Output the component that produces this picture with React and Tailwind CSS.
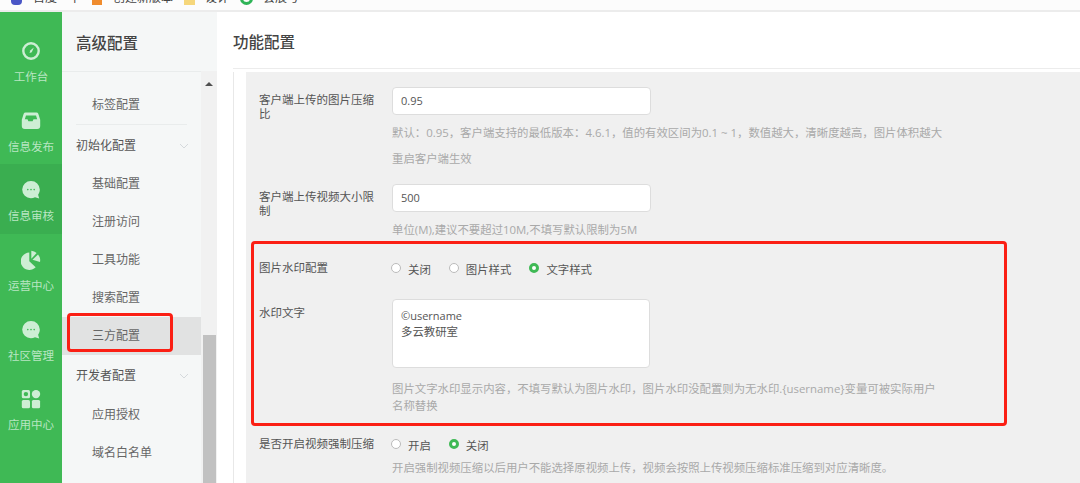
const cjk = "font-['Open_Sans','Noto_Sans_CJK_SC',sans-serif]";

function WorkIcon() {
  return (
    <svg width="20" height="20" viewBox="0 0 20 20" fill="none">
      <circle cx="10" cy="10" r="7.7" stroke="#cdeed4" strokeWidth="2.4" />
      <path d="M12.8 6.6 L10.8 11.2 L8.6 11.9 L9.2 9.6 Z" fill="#cdeed4" />
    </svg>
  );
}

function InboxIcon() {
  return (
    <svg width="20" height="20" viewBox="0 0 20 20">
      <path d="M4.5 1.5h11a2 2 0 0 1 1.8 1.2l1.9 6v6.3a3 3 0 0 1-3 3H3.8a3 3 0 0 1-3-3V8.7l1.9-6a2 2 0 0 1 1.8-1.2z" fill="#cdeed4" />
      <path d="M5 4.5h10l1.2 3.8h-3.7l-.9 2H7.4l-.9-2H3.8z" fill="#3fb955" />
    </svg>
  );
}

function ChatIcon() {
  return (
    <svg width="20" height="20" viewBox="0 0 20 20">
      <path d="M10 1a8.7 8.7 0 0 1 8.8 8.6c0 2.100-.6 3.800-1.700 5.100l1.100 3.800-4.200-1.300A9.300 9.300 0 0 1 10 18.200 8.600 8.600 0 0 1 1.200 9.600 8.700 8.700 0 0 1 10 1z" fill="#cdeed4" />
      <circle cx="6.800" cy="9.600" r=".8" fill="#3fb955" />
      <circle cx="10" cy="9.600" r=".8" fill="#3fb955" />
      <circle cx="13.200" cy="9.600" r=".8" fill="#3fb955" />
    </svg>
  );
}

function PieIcon() {
  return (
    <svg width="20" height="20" viewBox="0 0 20 20">
      <path d="M8.300 2.600v8.700l6.400 6A8.700 8.700 0 1 1 8.300 2.600z" fill="#cdeed4" />
      <path d="M10.300 .8a8 8 0 0 1 5.300 2.300l-5.300 5.700z" fill="#cdeed4" />
      <path d="M17 4.500a8.700 8.700 0 0 1 2 7.500l-7.500-2.200z" fill="#cdeed4" />
    </svg>
  );
}

function AppsIcon() {
  return (
    <svg width="20" height="20" viewBox="0 0 20 20">
      <rect x=".8" y="1" width="8.200" height="8.200" rx="1.500" fill="#cdeed4" />
      <circle cx="4.900" cy="5.100" r="2.200" fill="#3fb955" />
      <circle cx="15" cy="5.100" r="4.200" fill="#cdeed4" />
      <rect x=".8" y="11" width="8.200" height="8.200" rx="1.500" fill="#cdeed4" />
      <rect x="10.900" y="11" width="8.200" height="8.200" rx="1.500" fill="#cdeed4" />
    </svg>
  );
}

function Chevron() {
  return (
    <svg width="10" height="6" viewBox="0 0 10 6" fill="none">
      <path d="M1 1l4 4 4-4" stroke="#d5d9dc" strokeWidth="1" />
    </svg>
  );
}

function Rail({ icon, label, active }) {
  return (
    <div className={`flex h-[69.700px] flex-col items-center pt-[16px] ${active ? "bg-[#3aae50]" : ""}`}>
      {icon}
      <span className="mt-[9px] text-[11.500px] leading-[14px] whitespace-nowrap text-[#b9e6c3]">{label}</span>
    </div>
  );
}

function SubItem({ children, active }) {
  return (
    <div className={`flex h-[38px] items-center pl-[30px] text-[12px] text-[#666] ${active ? "bg-[#e1e2e2]" : ""}`}>
      {children}
    </div>
  );
}

function Group({ children }) {
  return (
    <div className="mt-[1.500px] flex h-[39px] items-center justify-between pr-[12px] pl-[14px] text-[12px] text-[#555]">
      {children}
      <Chevron />
    </div>
  );
}

function Radio({ on, label }) {
  return (
    <span className="flex items-center">
      {on ? (
        <span className="h-[10px] w-[10px] rounded-full border-[3px] border-[#3fb955] bg-white" />
      ) : (
        <span className="h-[10px] w-[10px] rounded-full border border-[#bbb] bg-white" />
      )}
      <span className="ml-[7px] pt-[3px] text-[11.400px] text-[#555]">{label}</span>
    </span>
  );
}

function Label({ children, className = "" }) {
  return <div className={`w-[133px] shrink-0 pr-[14px] text-[11.500px] leading-[14px] text-[#555] ${className}`}>{children}</div>;
}

function Hint({ children, className = "" }) {
  return <div className={`text-[11.400px] text-[#a9a9a9] ${className}`}>{children}</div>;
}

export default function App() {
  return (
    <div className={`relative flex h-[483px] w-[1080px] flex-col overflow-hidden bg-white ${cjk}`}>
      <div className="h-[12px] shrink-0 overflow-hidden border-b-2 border-[#ececec] bg-[#fcfcfc]">
        <div className="-mt-[10px] flex items-center pl-[11px] text-[12px] leading-[16px] text-[#444]">
          <span className="h-[14px] w-[11px] rounded-sm bg-[#4a56c6]" />
          <span className="ml-[11px] w-[48px]">百度一下</span>
          <span className="ml-[11px] h-[14px] w-[10px] bg-[#f08c2e]" />
          <span className="ml-[11px] w-[60px]">创建新版本</span>
          <span className="ml-[11px] h-[14px] w-[11px] bg-[#f6d77c]" />
          <span className="ml-[10px] w-[24px]">设计</span>
          <span className="ml-[11px] h-[14px] w-[13px] rounded-full border-[3px] border-[#2fb457]" />
          <span className="ml-[10px]">会展号</span>
        </div>
      </div>
      <div className="flex min-h-0 flex-1">
        <aside className="w-[62px] shrink-0 bg-[#3fb955] pt-[13px]">
          <Rail icon={<WorkIcon />} label="工作台" />
          <Rail icon={<InboxIcon />} label="信息发布" />
          <Rail icon={<ChatIcon />} label="信息审核" active />
          <Rail icon={<PieIcon />} label="运营中心" />
          <Rail icon={<ChatIcon />} label="社区管理" />
          <Rail icon={<AppsIcon />} label="应用中心" />
        </aside>
        <aside className="flex w-[155px] shrink-0 flex-col bg-[#f5f7f7]">
          <div className="flex h-[59px] shrink-0 items-center pt-[5px] pl-[14px] text-[15.500px] font-medium text-[#444]">高级配置</div>
          <div className="flex min-h-0 flex-1">
            <div className="w-[139px] shrink-0">
              <div className="mb-[14px] mr-[-1px] border-t border-[#e9ecec]" />
              <SubItem>标签配置</SubItem>
              <div className="mr-[14px] ml-[14px] -mt-[0.500px] border-t border-[#e9ecec]" />
              <Group>初始化配置</Group>
              <SubItem>基础配置</SubItem>
              <SubItem>注册访问</SubItem>
              <SubItem>工具功能</SubItem>
              <SubItem>搜索配置</SubItem>
              <SubItem active>三方配置</SubItem>
              <Group>开发者配置</Group>
              <SubItem>应用授权</SubItem>
              <SubItem>域名白名单</SubItem>
            </div>
            <div className="flex w-[16px] flex-col items-center bg-[#f1f1f1] pt-[11px]">
              <div className="h-0 w-0 border-x-[4px] border-b-[4px] border-x-transparent border-b-[#505050]" />
              <div className="mt-auto h-[148px] w-[13px] bg-[#c1c1c1]" />
            </div>
          </div>
        </aside>
        <main className="min-w-0 flex-1">
          <div className="ml-[16px] flex h-[57px] items-center border-b border-[#ececec] pt-[6px] text-[15.500px] font-medium text-[#444]">
            功能配置
          </div>
          <div className="mt-[3px] flex h-[412px]">
            <div className="ml-[16px] w-[13px] border-l border-[#e8e8e8]" />
            <div className="relative min-w-0 flex-1 bg-[#f0f0f0] pt-[15px] pl-[13px]">
              <div className="flex">
                <Label className="pt-[6px]">客户端上传的图片压缩比</Label>
                <div>
                  <div className="flex h-[28px] w-[259px] items-center rounded border border-[#ddd] bg-white pl-[8px] text-[11px] text-[#555]">0.95</div>
                  <Hint className="mt-[9px] whitespace-nowrap">默认：0.95，客户端支持的最低版本：4.6.1，值的有效区间为0.1 ~ 1，数值越大，清晰度越高，图片体积越大</Hint>
                  <Hint className="mt-[9px]">重启客户端生效</Hint>
                </div>
              </div>
              <div className="mt-[17px] flex">
                <Label className="pt-[6px]">客户端上传视频大小限制</Label>
                <div>
                  <div className="flex h-[28px] w-[259px] items-center rounded border border-[#ddd] bg-white pl-[8px] text-[11px] text-[#555]">500</div>
                  <Hint className="mt-[9px]">单位(M),建议不要超过10M,不填写默认限制为5M</Hint>
                </div>
              </div>
              <div className="mt-[20px] flex items-center">
                <Label>图片水印配置</Label>
                <div className="-ml-[1px] flex gap-[18px]">
                  <Radio label="关闭" />
                  <Radio label="图片样式" />
                  <Radio on label="文字样式" />
                </div>
              </div>
              <div className="mt-[21px] flex">
                <Label className="pt-[7px]">水印文字</Label>
                <div>
                  <div className="h-[69px] w-[258px] rounded border border-[#ddd] bg-white px-[8px] pt-[8px] text-[11.400px] leading-[16px] text-[#555]">
                    <span className="text-[11px]">©username</span>
                    <br />
                    多云教研室
                  </div>
                  <Hint className="mt-[12px] w-[552px] leading-[17px]">图片文字水印显示内容，不填写默认为图片水印，图片水印没配置则为无水印.{"{username}"}变量可被实际用户名称替换</Hint>
                </div>
              </div>
              <div className="mt-[20px] flex items-center">
                <Label className="pr-0">是否开启视频强制压缩</Label>
                <div className="-ml-[1px] flex gap-[18px]">
                  <Radio label="开启" />
                  <Radio on label="关闭" />
                </div>
              </div>
              <Hint className="mt-[4px] ml-[133px] whitespace-nowrap">开启强制视频压缩以后用户不能选择原视频上传，视频会按照上传视频压缩标准压缩到对应清晰度。</Hint>
              <div className="absolute top-[169px] left-[5px] h-[185px] w-[756px] rounded-sm border-[3px] border-[#fb1f14]" />
            </div>
          </div>
        </main>
      </div>
      <div className="absolute top-[313px] left-[67px] h-[39px] w-[106px] rounded-sm border-[3px] border-[#fb1f14]" />
    </div>
  );
}
